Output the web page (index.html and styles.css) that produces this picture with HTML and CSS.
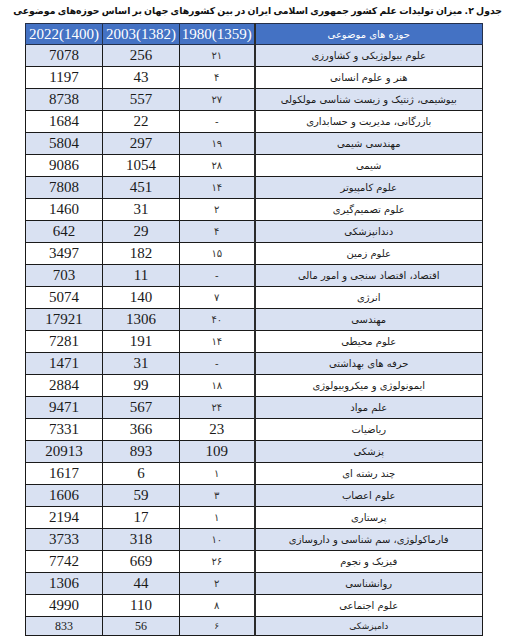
FILE: index.html
```html
<!DOCTYPE html>
<html lang="fa">
<head>
<meta charset="utf-8">
<title>جدول ۲</title>
<link rel="stylesheet" href="styles.css">
</head>
<body>
<div class="page">
  <h1 class="title" dir="rtl">جدول ۲. میزان تولیدات علم کشور جمهوری اسلامی ایران در بین کشورهای جهان بر اساس حوزه‌های موضوعی</h1>
  <table class="data">
    <colgroup>
      <col class="c-num"><col class="c-num"><col class="c-num2"><col class="c-subj">
    </colgroup>
    <thead>
      <tr><th>2022(1400)</th><th>2003(1382)</th><th>1980(1359)</th><th class="subj" dir="rtl">حوزه های موضوعی</th></tr>
    </thead>
    <tbody>
      <tr><td>7078</td><td>256</td><td class="fa">۲۱</td><td class="subj" dir="rtl">علوم بیولوژیکی  و کشاورزی</td></tr>
      <tr><td>1197</td><td>43</td><td class="fa">۴</td><td class="subj" dir="rtl">هنر و علوم انسانی</td></tr>
      <tr><td>8738</td><td>557</td><td class="fa">۲۷</td><td class="subj" dir="rtl">بیوشیمی، ژنتیک و زیست شناسی مولکولی</td></tr>
      <tr><td>1684</td><td>22</td><td class="fa">-</td><td class="subj" dir="rtl">بازرگانی، مدیریت و حسابداری</td></tr>
      <tr><td>5804</td><td>297</td><td class="fa">۱۹</td><td class="subj" dir="rtl">مهندسی شیمی</td></tr>
      <tr><td>9086</td><td>1054</td><td class="fa">۲۸</td><td class="subj" dir="rtl">شیمی</td></tr>
      <tr><td>7808</td><td>451</td><td class="fa">۱۴</td><td class="subj" dir="rtl">علوم کامپیوتر</td></tr>
      <tr><td>1460</td><td>31</td><td class="fa">۲</td><td class="subj" dir="rtl">علوم تصمیم‌گیری</td></tr>
      <tr><td>642</td><td>29</td><td class="fa">۴</td><td class="subj" dir="rtl">دندانپزشکی</td></tr>
      <tr><td>3497</td><td>182</td><td class="fa">۱۵</td><td class="subj" dir="rtl">علوم زمین</td></tr>
      <tr><td>703</td><td>11</td><td class="fa">-</td><td class="subj" dir="rtl">اقتصاد، اقتصاد سنجی و امور مالی</td></tr>
      <tr><td>5074</td><td>140</td><td class="fa">۷</td><td class="subj" dir="rtl">انرژی</td></tr>
      <tr><td>17921</td><td>1306</td><td class="fa">۴۰</td><td class="subj" dir="rtl">مهندسی</td></tr>
      <tr><td>7281</td><td>191</td><td class="fa">۱۴</td><td class="subj" dir="rtl">علوم محیطی</td></tr>
      <tr><td>1471</td><td>31</td><td class="fa">-</td><td class="subj" dir="rtl">حرفه های بهداشتی</td></tr>
      <tr><td>2884</td><td>99</td><td class="fa">۱۸</td><td class="subj" dir="rtl">ایمونولوژی  و میکروبیولوژی</td></tr>
      <tr><td>9471</td><td>567</td><td class="fa">۲۴</td><td class="subj" dir="rtl">علم مواد</td></tr>
      <tr><td>7331</td><td>366</td><td>23</td><td class="subj" dir="rtl">ریاضیات</td></tr>
      <tr><td>20913</td><td>893</td><td>109</td><td class="subj" dir="rtl">پزشکی</td></tr>
      <tr><td>1617</td><td>6</td><td class="fa">۱</td><td class="subj" dir="rtl">چند رشته ای</td></tr>
      <tr><td>1606</td><td>59</td><td class="fa">۳</td><td class="subj" dir="rtl">علوم اعصاب</td></tr>
      <tr><td>2194</td><td>17</td><td class="fa">۱</td><td class="subj" dir="rtl">پرستاری</td></tr>
      <tr><td>3733</td><td>318</td><td class="fa">۱۰</td><td class="subj" dir="rtl">فارماکولوژی، سم شناسی و داروسازی</td></tr>
      <tr><td>7742</td><td>669</td><td class="fa">۲۶</td><td class="subj" dir="rtl">فیزیک و نجوم</td></tr>
      <tr><td>1306</td><td>44</td><td class="fa">۲</td><td class="subj" dir="rtl">روانشناسی</td></tr>
      <tr><td>4990</td><td>110</td><td class="fa">۸</td><td class="subj" dir="rtl">علوم اجتماعی</td></tr>
      <tr class="last"><td>833</td><td>56</td><td class="fa">۶</td><td class="subj" dir="rtl">دامپزشکی</td></tr>
    </tbody>
  </table>
</div>
</body>
</html>
```

FILE: styles.css
```css
html, body {
  margin: 0;
  padding: 0;
  background: #ffffff;
}

.page {
  width: 505px;
  height: 640px;
  overflow: hidden;
  padding-top: 3px;
  box-sizing: border-box;
}

.title {
  margin: 0 3px 0 2px;
  font-family: "DejaVu Sans", "Noto Sans", sans-serif;
  font-weight: bold;
  font-size: 9.3px;
  word-spacing: -1px;
  line-height: 15px;
  color: #111111;
  text-align: right;
  white-space: nowrap;
}

.data {
  margin: 5px 0 0 25px;
  border-collapse: collapse;
  table-layout: fixed;
  width: 457px;
  border: 1px solid #1a1a1a;
}

.c-num { width: 77px; }
.c-num2 { width: 75px; }
.c-subj { width: 228px; }

.data th,
.data td {
  padding: 0;
  text-align: center;
  vertical-align: middle;
  border: 1px solid #1a1a1a;
  font-family: "Liberation Serif", "Times New Roman", serif;
  color: #1a1a1a;
}

.data th {
  height: 20px;
  background: #4472c4;
  color: #ffffff;
  font-weight: normal;
  font-size: 15px;
  border-color: #24304a;
}

.data td {
  height: 21px;
  font-size: 15px;
}

.data tbody tr:nth-child(odd) td {
  background: #d9e1f2;
}

.data .subj {
  font-family: "DejaVu Sans", "Noto Sans", sans-serif;
  font-size: 10px;
  border-left: 2px solid #2a2a2a;
}

.data th.subj {
  font-size: 10px;
}

.data td.fa {
  font-family: "DejaVu Sans", "Noto Sans", sans-serif;
  font-size: 10px;
  color: #333333;
}

.data tr.last td {
  height: 18px;
  font-size: 12px;
}

.data tr.last td.fa,
.data tr.last td.subj {
  font-size: 9px;
}
```
